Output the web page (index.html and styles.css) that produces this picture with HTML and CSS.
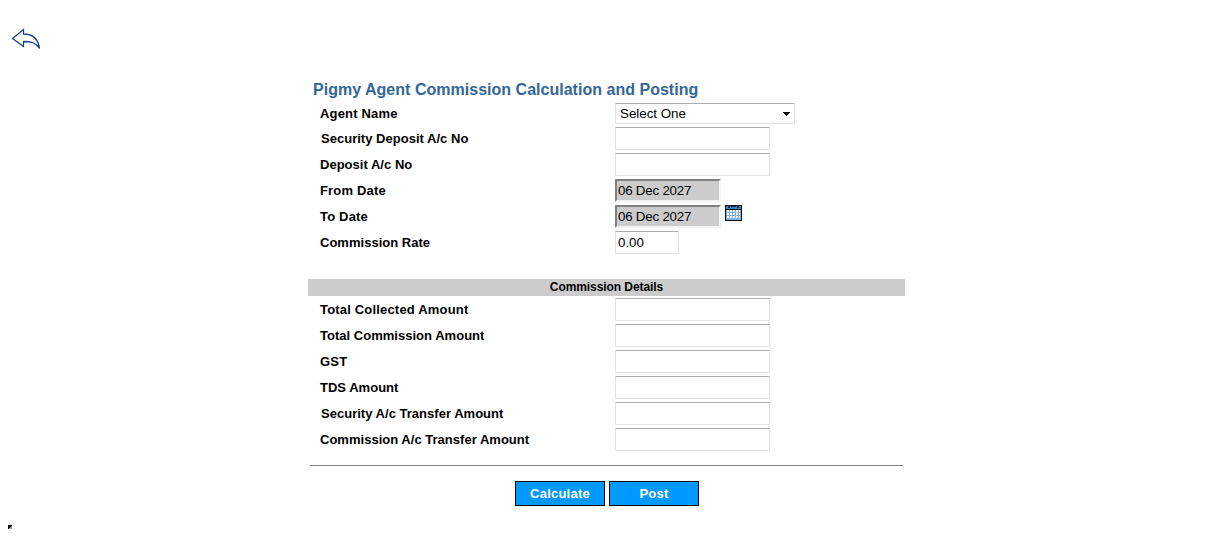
FILE: index.html
```html
<!DOCTYPE html>
<html lang="en">
<head>
<meta charset="utf-8">
<title>Pigmy Agent Commission Calculation and Posting</title>
<link rel="stylesheet" href="styles.css">
</head>
<body>
<header class="toolbar">
<svg class="back" width="30" height="22" viewBox="0 0 30 22"><path d="M1.5 10.5 L12.5 1.5 V6 C20 6 27 9.5 28.5 20.5 C25 14.5 20 13.5 12.5 13.5 V18.5 Z" fill="#fff" stroke="#1c3f88" stroke-width="1.3"/></svg>
</header>
<main class="form">
<h1 class="title">Pigmy Agent Commission Calculation and Posting</h1>
<div class="row first"><label class="label loose">Agent Name</label><div class="select"><span>Select One</span><svg width="7" height="4" viewBox="0 0 7 4" shape-rendering="crispEdges"><path d="M0 0H7V1H6V2H5V3H4V4H3V3H2V2H1V1H0Z"/></svg></div></div>
<div class="row"><label class="label indent">Security Deposit A/c No</label><input class="field"></div>
<div class="row"><label class="label">Deposit A/c No</label><input class="field"></div>
<div class="row"><label class="label loose">From Date</label><input class="field date" value="06 Dec 2027" readonly></div>
<div class="row"><label class="label loose">To Date</label><input class="field date" value="06 Dec 2027" readonly>
<svg class="calendar" width="17" height="16" viewBox="0 0 17 16" shape-rendering="crispEdges"><path fill="#08101d" d="M0 0H17V16H0Z"/><path fill="#427fb8" d="M1 1H16V4H1Z"/><path fill="#152b48" d="M3 0H5V3H3ZM12 0H14V3H12ZM6 1H11V2H6Z"/><path fill="#82b2dc" d="M1 5H16V15H1Z"/><path fill="#fff" d="M2 5H4V7H2ZM5 5H7V7H5ZM8 5H10V7H8ZM11 5H13V7H11ZM14 5H15V7H14ZM2 8H4V10H2ZM5 8H7V10H5ZM8 8H10V10H8ZM11 8H13V10H11ZM14 8H15V10H14ZM2 11H4V13H2ZM5 11H7V13H5ZM8 11H10V13H8ZM11 11H13V13H11ZM14 11H15V13H14Z"/></svg></div>
<div class="row"><label class="label">Commission Rate</label><input class="field rate" value="0.00"></div>
<h2 class="section">Commission Details</h2>
<div class="row"><label class="label loose">Total Collected Amount</label><input class="field"></div>
<div class="row"><label class="label">Total Commission Amount</label><input class="field"></div>
<div class="row"><label class="label loose">GST</label><input class="field"></div>
<div class="row"><label class="label">TDS Amount</label><input class="field"></div>
<div class="row"><label class="label indent">Security A/c Transfer Amount</label><input class="field"></div>
<div class="row"><label class="label">Commission A/c Transfer Amount</label><input class="field"></div>
<div class="rule"></div>
<div class="actions"><button class="button">Calculate</button><button class="button">Post</button></div>
</main>
<footer class="footer"><svg width="4" height="4" viewBox="0 0 4 4" shape-rendering="crispEdges"><path fill="#999" d="M0 0H4V4H0Z"/><path d="M0 0H4V1H3V2H2V3H1V4H0Z"/></svg></footer>
</body>
</html>
```
FILE: styles.css
```css
* { box-sizing: border-box; }
body { margin: 0; height: 537px; overflow: hidden; background: #fff; color: #000; font-family: "Liberation Sans", Arial, sans-serif; font-size: 13px; }
svg { display: block; flex: none; }
.toolbar { height: 80px; padding: 28px 0 0 11px; }
.form { width: 597px; margin-left: 308px; }
.title { margin: 0; height: 21px; padding-left: 5px; font-size: 16px; line-height: 19px; color: #336699; letter-spacing: 0.02px; white-space: nowrap; }
.row { display: flex; height: 26px; align-items: flex-start; padding-top: 2px; }
.first { height: 24px; }
.label { width: 307px; padding-left: 12px; font-weight: bold; line-height: 23px; letter-spacing: 0.02px; white-space: nowrap; }
.loose { letter-spacing: 0.18px; }
.first .label { line-height: 21px; }
.indent { padding-left: 13px; }
.field { width: 155px; height: 23px; margin: 0; padding: 0 2px 1px; border: 1px solid #e2e3ea; border-top-color: #abadb3; border-radius: 1px; background: #fff; font: 13.333px "Liberation Sans", Arial, sans-serif; outline: none; }
.date { width: 106px; padding: 0 1px 1px; border: 2px solid; border-color: #808080 #f4f4f4 #f4f4f4 #808080; border-radius: 0; background: #ccc; letter-spacing: -0.22px; }
.rate { width: 64px; }
.select { display: flex; width: 180px; height: 21px; align-items: center; justify-content: space-between; padding: 0 4px; border: 1px solid #e2e3ea; border-top-color: #abadb3; border-radius: 1px; font-size: 13.333px; line-height: 19px; }
.calendar { margin-left: 4px; }
.section { margin: 24px 0 0; height: 17px; background: #ccc; font-size: 12px; line-height: 16px; letter-spacing: -0.07px; text-align: center; }
.rule { height: 1px; margin: 13px 2px 15px; background: #808080; }
.actions { display: flex; gap: 4px; padding-left: 207px; }
.button { width: 90px; height: 25px; margin: 0; padding: 0; border: 1px solid #000; background: #0099ff; color: #fff; font: bold 13px "Liberation Sans", Arial, sans-serif; letter-spacing: 0.22px; }
.footer { margin: 19px 0 0 8px; }
```
